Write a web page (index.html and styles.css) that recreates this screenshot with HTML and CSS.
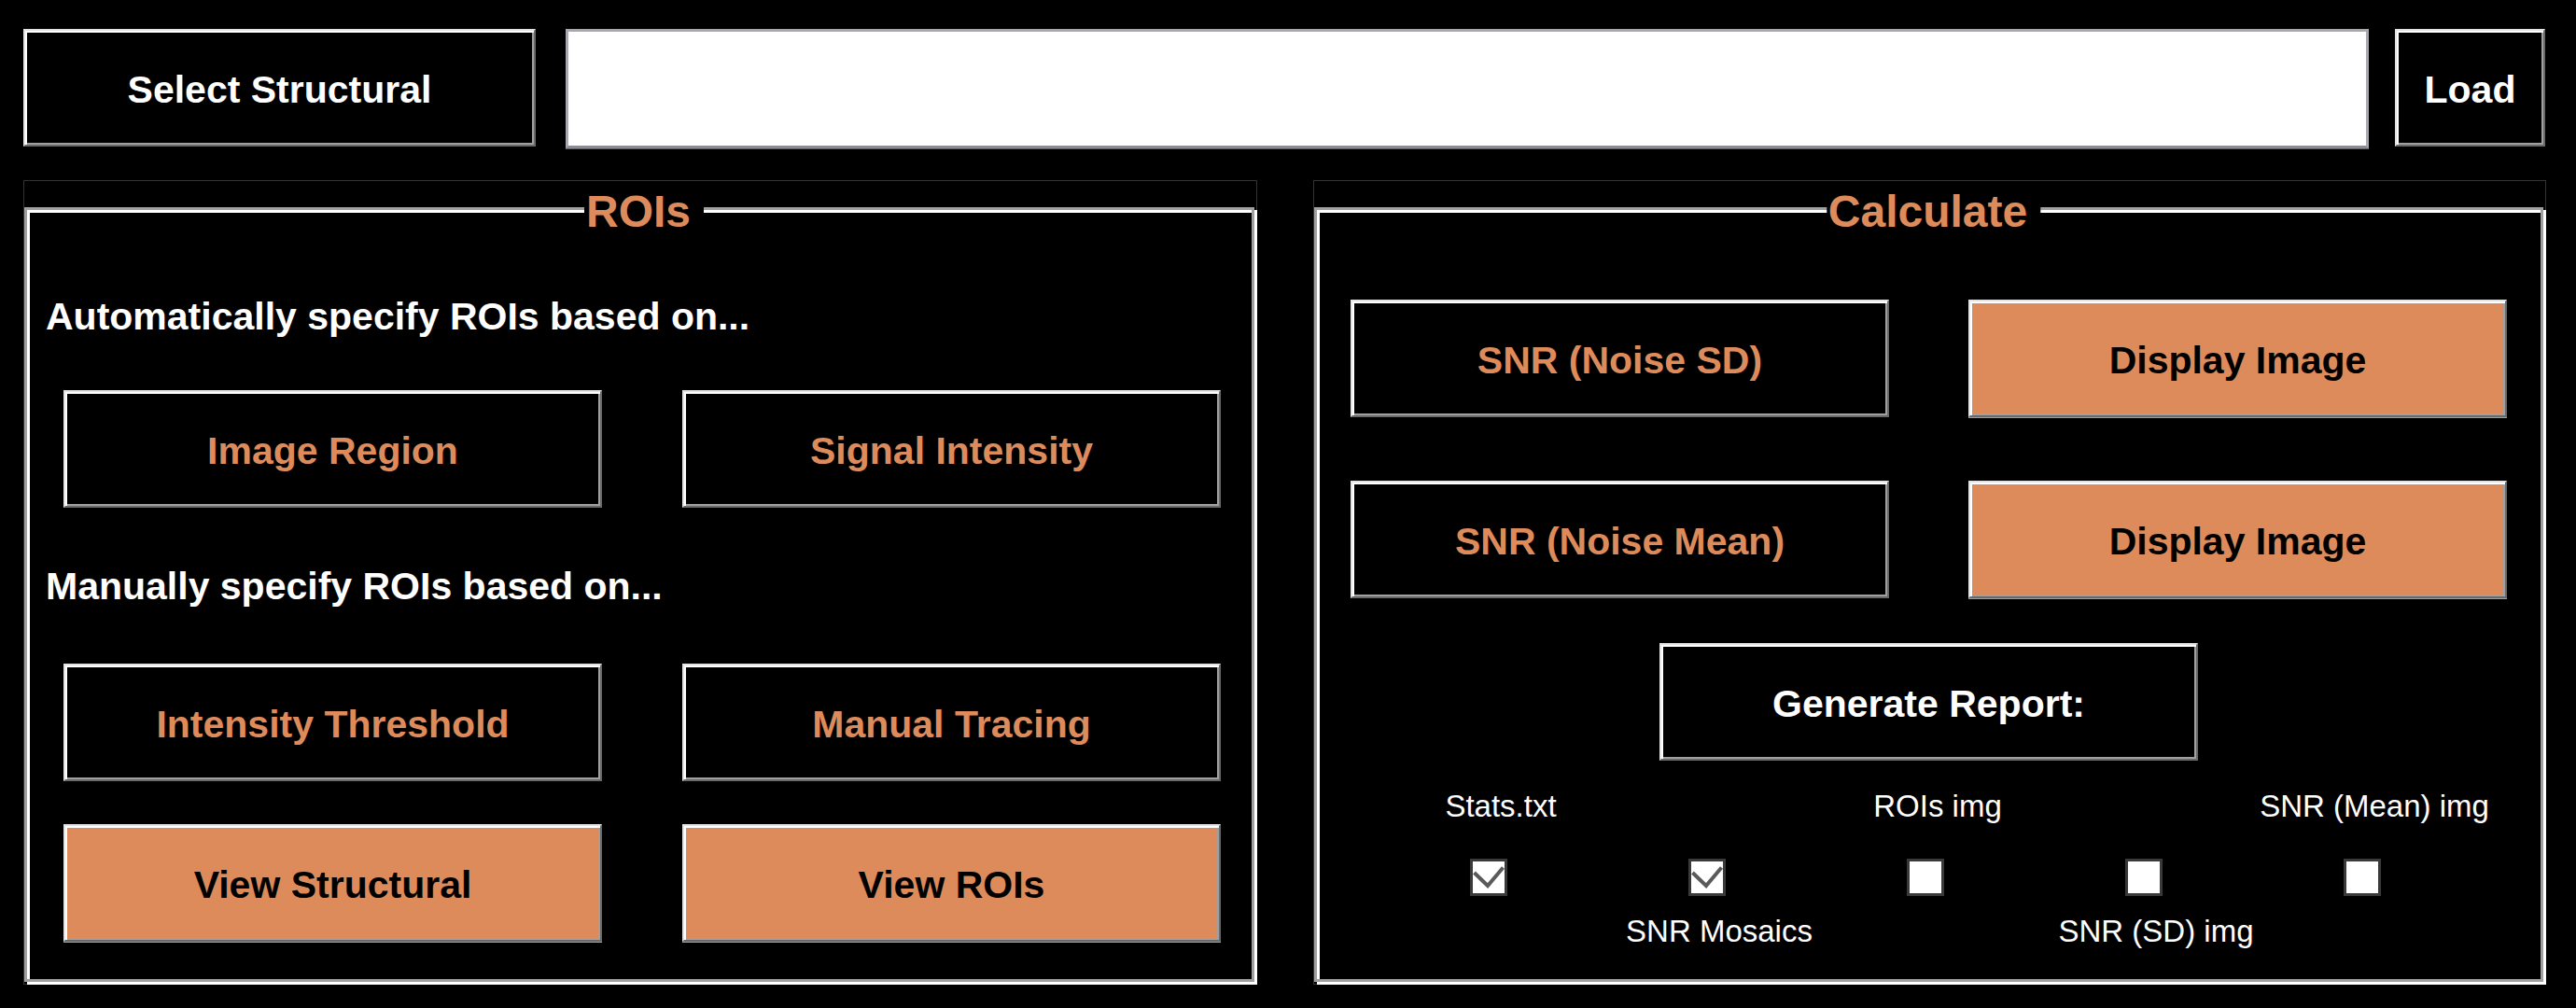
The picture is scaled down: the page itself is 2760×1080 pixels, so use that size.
FILE: index.html
```html
<!DOCTYPE html>
<html lang="en">
<head>
<meta charset="utf-8">
<title>SNR Tool</title>
<link rel="stylesheet" href="styles.css">
</head>
<body>
<div class="app">
  <div class="topbar">
    <button class="btn btn-select">Select Structural</button>
    <input class="path-input" type="text" aria-label="Structural file">
    <button class="btn btn-load">Load</button>
  </div>

  <div class="panels">
    <section class="panel panel-left">
      <h2 class="panel-title">ROIs</h2>
      <div class="frame frame-rois">
        <p class="hint">Automatically specify ROIs based on...</p>
        <div class="btn-grid grid-auto">
          <button class="btn btn-orange-text">Image Region</button>
          <button class="btn btn-orange-text">Signal Intensity</button>
        </div>
        <p class="hint hint-manual">Manually specify ROIs based on...</p>
        <div class="btn-grid grid-manual">
          <button class="btn btn-orange-text">Intensity Threshold</button>
          <button class="btn btn-orange-text">Manual Tracing</button>
        </div>
        <div class="btn-grid grid-view">
          <button class="btn btn-fill">View Structural</button>
          <button class="btn btn-fill">View ROIs</button>
        </div>
      </div>
    </section>

    <section class="panel panel-right">
      <h2 class="panel-title">Calculate</h2>
      <div class="frame frame-calc">
        <div class="calc-grid">
          <button class="btn btn-orange-text">SNR (Noise SD)</button>
          <button class="btn btn-fill">Display Image</button>
          <button class="btn btn-orange-text">SNR (Noise Mean)</button>
          <button class="btn btn-fill">Display Image</button>
        </div>
        <button class="btn btn-report">Generate Report:</button>

        <div class="cb-row labels-top">
          <div class="cb-cell cb-label">Stats.txt</div>
          <div class="cb-cell cb-label"></div>
          <div class="cb-cell cb-label">ROIs img</div>
          <div class="cb-cell cb-label"></div>
          <div class="cb-cell cb-label">SNR (Mean) img</div>
        </div>
        <div class="cb-row cb-boxes">
          <div class="cb-cell"><span class="checkbox"><svg viewBox="0 0 34 34" class="check"><path d="M1.5 12 L16 26 L32.5 6.5"/></svg></span></div>
          <div class="cb-cell"><span class="checkbox"><svg viewBox="0 0 34 34" class="check"><path d="M1.5 12 L16 26 L32.5 6.5"/></svg></span></div>
          <div class="cb-cell"><span class="checkbox"></span></div>
          <div class="cb-cell"><span class="checkbox"></span></div>
          <div class="cb-cell"><span class="checkbox"></span></div>
        </div>
        <div class="cb-row labels-bottom">
          <div class="cb-cell cb-label"></div>
          <div class="cb-cell cb-label">SNR Mosaics</div>
          <div class="cb-cell cb-label"></div>
          <div class="cb-cell cb-label">SNR (SD) img</div>
          <div class="cb-cell cb-label"></div>
        </div>
      </div>
    </section>
  </div>
</div>
</body>
</html>
```

FILE: styles.css
```css
* {
  box-sizing: border-box;
}

html,
body {
  margin: 0;
  background: #000;
}

body {
  font-family: "Liberation Sans", Arial, sans-serif;
}

.app {
  width: 2760px;
  height: 1080px;
  padding: 31px 0 0 25px;
  overflow: hidden;
}

/* ---------- top bar ---------- */
.topbar {
  display: flex;
  align-items: flex-start;
}

.btn {
  display: flex;
  align-items: center;
  justify-content: center;
  height: 126px;
  margin: 0;
  padding: 4px 0 0;
  background: #000;
  color: #fff;
  font: bold 41px/48px "Liberation Sans", Arial, sans-serif;
  white-space: nowrap;
  border: 2px solid;
  border-color: #e3e3e3 #696969 #696969 #e3e3e3;
  box-shadow: inset 2px 2px 0 #fff, inset -2px -2px 0 #a0a0a0;
}

.btn-select {
  width: 549px;
}

.path-input {
  width: 1932px;
  height: 128px;
  margin: 0 0 0 32px;
  padding: 0;
  background: #fff;
  border: 3px solid #a8a8ae;
  border-bottom-color: #8c8c92;
  box-shadow: 0 1px 0 #5c5c62;
}

.btn-load {
  width: 161px;
  margin-left: 28px;
}

/* ---------- panels ---------- */
.panels {
  display: flex;
  gap: 60px;
  margin-top: 34px;
}

.panel {
  position: relative;
  height: 862px;
  border: 1px solid #333;
}

.panel-left {
  width: 1322px;
}

.panel-right {
  width: 1321px;
}

.panel-title {
  position: absolute;
  top: 5px;
  left: calc(50% + 4px);
  transform: translateX(-50%);
  margin: 0;
  padding: 0 14px 0 2px;
  background: #000;
  color: #dd8b5b;
  font: bold 48px/56px "Liberation Sans", Arial, sans-serif;
  white-space: nowrap;
}

.frame {
  height: 830px;
  margin: 28px 2px 0 0;
  border: 3px solid #a0a0a0;
  box-shadow: inset 3px 3px 0 #fff, 3px 3px 0 #fff;
}

/* ---------- ROIs panel ---------- */
.frame-rois {
  padding-top: 90px;
}

.hint {
  margin: 0;
  padding-left: 20px;
  color: #fff;
  font: bold 41px/48px "Liberation Sans", Arial, sans-serif;
  white-space: nowrap;
}

.hint-manual {
  margin-top: 60px;
}

.btn-grid {
  display: grid;
  grid-template-columns: 577px 577px;
  column-gap: 86px;
  margin-left: 39px;
}

.grid-auto {
  margin-top: 55px;
}

.grid-manual {
  margin-top: 59px;
}

.grid-view {
  margin-top: 46px;
}

.btn-orange-text {
  color: #dd8b5b;
}

.btn-fill {
  background: #dd8b5b;
  color: #000;
  box-shadow: inset 2px 2px 0 #fff, inset -2px -2px 0 #a0a0a0, 0 1px 0 #dd8b5b;
}

/* ---------- Calculate panel ---------- */
.frame-calc {
  padding-top: 96px;
}

.calc-grid {
  display: grid;
  grid-template-columns: 577px 577px;
  column-gap: 85px;
  row-gap: 68px;
  justify-content: center;
}

.btn-report {
  width: 577px;
  margin: 48px auto 0;
}

.cb-row {
  display: flex;
  margin-left: 67px;
}

.cb-cell {
  width: 234px;
  display: flex;
  justify-content: center;
}

.cb-label {
  height: 38px;
  padding-left: 26px;
  color: #fff;
  font: 33px/38px "Liberation Sans", Arial, sans-serif;
  white-space: nowrap;
}

.labels-top {
  margin-top: 30px;
}

.cb-boxes {
  margin-top: 37px;
}

.labels-bottom {
  margin-top: 19px;
}

.checkbox {
  display: block;
  width: 40px;
  height: 40px;
  background: #fff;
  border: 3px solid #3a3a3a;
}

.check {
  display: block;
  width: 34px;
  height: 34px;
  fill: none;
  stroke: #5a5a5a;
  stroke-width: 4;
}
```
